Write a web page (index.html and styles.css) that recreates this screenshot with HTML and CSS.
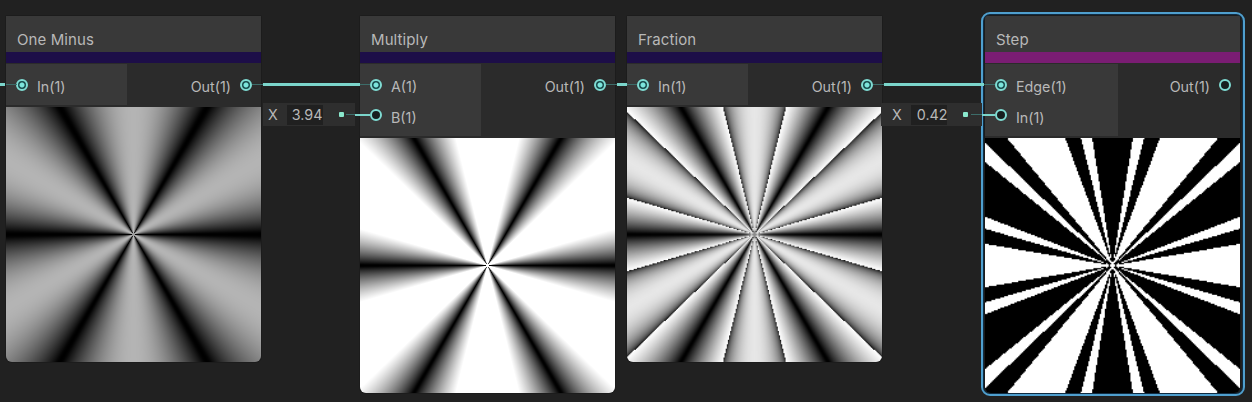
FILE: index.html
```html
<!DOCTYPE html>
<html lang="en">
<head>
<meta charset="utf-8">
<title>Shader Graph</title>
<link rel="stylesheet" href="styles.css">
</head>
<body>
<main class="graph">
  <section class="node one-minus">
    <h2 class="title">One Minus</h2>
    <div class="ports">
      <div class="inputs"><div class="port"><i class="dot on"></i><span>In(1)</span></div></div>
      <div class="outputs"><div class="port"><span>Out(1)</span><i class="dot on"></i></div></div>
    </div>
    <canvas class="preview" width="255" height="255" data-stage="base"></canvas>
  </section>
  <section class="node multiply">
    <h2 class="title">Multiply</h2>
    <div class="ports">
      <div class="inputs"><div class="port"><i class="dot on"></i><span>A(1)</span></div><div class="port"><i class="dot"></i><span>B(1)</span></div></div>
      <div class="outputs"><div class="port"><span>Out(1)</span><i class="dot on"></i></div></div>
    </div>
    <canvas class="preview" width="255" height="255" data-stage="multiply"></canvas>
  </section>
  <section class="node fraction">
    <h2 class="title">Fraction</h2>
    <div class="ports">
      <div class="inputs"><div class="port"><i class="dot on"></i><span>In(1)</span></div></div>
      <div class="outputs"><div class="port"><span>Out(1)</span><i class="dot on"></i></div></div>
    </div>
    <canvas class="preview" width="230" height="230" data-stage="fraction"></canvas>
  </section>
  <section class="node step">
    <h2 class="title">Step</h2>
    <div class="ports">
      <div class="inputs"><div class="port"><i class="dot on"></i><span>Edge(1)</span></div><div class="port"><i class="dot"></i><span>In(1)</span></div></div>
      <div class="outputs"><div class="port"><span>Out(1)</span><i class="dot"></i></div></div>
    </div>
    <canvas class="preview" width="200" height="200" data-stage="step"></canvas>
  </section>
  <div class="value value-b"><label>X</label><span class="field">3.94</span><i class="pin"></i></div>
  <div class="value value-in"><label>X</label><span class="field">0.42</span><i class="pin"></i></div>
  <svg class="wires" width="1252" height="402" viewBox="0 0 1252 402">
    <g class="wire-dim">
      <path d="M6 84.5H17M252 84.5H370M606 84.5H637M873 84.5H995M346 114.5H370M971 114.5H995"/>
    </g>
    <g class="wire">
      <path d="M0 84.5H5M263 84.5H360M617 84.5H627M884 84.5H984"/>
      <path class="thin" d="M355 115H370M982 115H995"/>
    </g>
  </svg>
</main>
<script src="previews.js"></script>
</body>
</html>
```
FILE: styles.css
```css
body {
  margin: 0;
  background: #212121;
  color: #b8b8b8;
  font: 14.3px/20px Inter, "Liberation Sans", sans-serif;
}
.graph {
  position: relative;
  width: 1252px;
  height: 402px;
  overflow: hidden;
}
.node {
  position: absolute;
  top: 16px;
  width: 255px;
  border-radius: 2px 2px 6px 6px;
  background: #2b2b2b;
  box-shadow: 0 0 0 1px #1c1c1c;
}
.one-minus { left: 6px; }
.multiply { left: 360px; }
.fraction { left: 627px; }
.step { left: 985px; }
.step::after {
  content: "";
  position: absolute;
  inset: -4px -5px -3px -4px;
  border: 2px solid #4f9fce;
  border-radius: 9px;
  box-shadow: inset 0 0 0 1px #102c42;
}
.title {
  box-sizing: border-box;
  height: 47px;
  margin: 0;
  padding: 14px 0 0 11px;
  border-bottom: 11px solid #1d0e48;
  background: #393939;
  font-size: 15px;
  font-weight: 400;
  letter-spacing: 0.1px;
}
.step .title { border-color: #7a1d73; }
.ports {
  display: flex;
  margin-top: 1px;
  padding-bottom: 2px;
}
.inputs, .outputs {
  display: flex;
  flex-direction: column;
  gap: 10px;
  padding: 10px 9px 11px;
}
.inputs {
  width: 102px;
  padding-left: 10px;
  background: #393939;
}
.step .inputs { width: 114px; }
.outputs {
  flex: 1;
  align-items: flex-end;
}
.port {
  display: flex;
  gap: 9px;
  box-sizing: border-box;
  height: 20px;
  padding-top: 3px;
}
.port + .port { height: 21px; }
.port + .port span { padding-top: 1px; }
.dot {
  box-sizing: border-box;
  width: 12px;
  height: 12px;
  margin-top: 1.5px;
  border: 2px solid #7fdcd3;
  border-radius: 50%;
  background: #171f1f;
}
.dot.on { background: radial-gradient(circle, #7ce5dc 0 2px, #17494a 3px); }
.preview {
  display: block;
  width: 255px;
  height: 255px;
  border-radius: 0 0 6px 6px;
}
.value {
  position: absolute;
  top: 103px;
  display: flex;
  align-items: center;
  box-sizing: border-box;
  width: 92px;
  height: 23px;
  padding-left: 5px;
  background: #2e2e2e;
}
.value-b { left: 263px; }
.value-in { left: 881px; width: 101px; padding-left: 11px; }
.field {
  box-sizing: border-box;
  width: 36px;
  margin-left: 9px;
  padding-left: 5px;
  background: #202020;
}
.value-in .field { padding-left: 6px; }
.pin {
  width: 5px;
  height: 5px;
  margin-left: 16px;
  border-radius: 1px;
  background: #8ae8cd;
}
.wires {
  position: absolute;
  inset: 0;
}
.wire, .wire-dim { fill: none; }
.wire { stroke: #7bd5cb; stroke-width: 3; }
.wire .thin { stroke-width: 2; }
.wire-dim { stroke: #3c6c69; stroke-width: 1; }
```
FILE: previews.js
```js
const stages = {
  base: v => v,
  multiply: v => Math.min(1, v * 3.94),
  fraction: v => (v * 3.94) % 1,
  step: v => (v * 3.94) % 1 <= 0.42 ? 1 : 0
};

function toSrgb(c) {
  return 255 * (c <= 0.0031308 ? 12.92 * c : 1.055 * Math.pow(c, 1 / 2.4) - 0.055);
}

document.querySelectorAll(".preview").forEach(canvas => {
  const size = canvas.width;
  const context = canvas.getContext("2d");
  const image = context.createImageData(size, size);
  const stage = stages[canvas.dataset.stage];
  for (let y = 0; y < size; y++) {
    for (let x = 0; x < size; x++) {
      const dx = x + 0.5 - size / 2;
      const dy = y + 0.5 - size / 2;
      const wave = Math.hypot(dx, dy) < 2 ? 0.7 : Math.sin(3 * Math.atan2(dy, dx)) ** 2;
      const i = (y * size + x) * 4;
      image.data[i] = image.data[i + 1] = image.data[i + 2] = toSrgb(stage(0.456 * wave));
      image.data[i + 3] = 255;
    }
  }
  context.putImageData(image, 0, 0);
});
```
